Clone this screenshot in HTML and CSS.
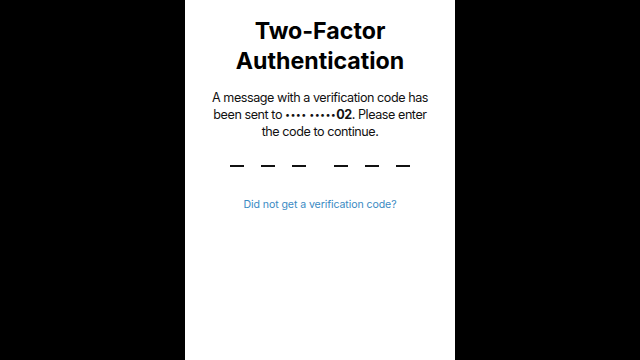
FILE: index.html
```html
<!DOCTYPE html>
<html>
<head>
<meta charset="utf-8">
<link rel="stylesheet" href="styles.css">
</head>
<body>
<div class="screen">
  <h1 class="title">Two-Factor<br>Authentication</h1>
  <p class="message">A message with a verification code has<br>been sent to <span class="mask">•••• •••••</span><b>02</b>. Please enter<br>the code to continue.</p>
  <div class="code">
    <div class="group"><span class="slot"></span><span class="slot"></span><span class="slot"></span></div>
    <div class="group"><span class="slot"></span><span class="slot"></span><span class="slot"></span></div>
  </div>
  <a class="link" href="#">Did not get a verification code?</a>
</div>
</body>
</html>
```
FILE: styles.css
```css
html, body {
  margin: 0;
  padding: 0;
  background: #000;
  height: 100%;
}
body {
  display: flex;
  justify-content: center;
  font-family: Inter, "Liberation Sans", sans-serif;
}
.screen {
  width: 270px;
  height: 360px;
  background: #fff;
  display: flex;
  flex-direction: column;
  align-items: center;
  text-align: center;
}
.title {
  margin: 16px 0 0;
  font-size: 23.2px;
  line-height: 30px;
  font-weight: 700;
  color: #000;
  letter-spacing: 0;
}
.message {
  margin: 13px 0 0;
  font-size: 12.6px;
  line-height: 17px;
  color: #111;
  letter-spacing: -0.45px;
  white-space: nowrap;
}
.message b { font-weight: 700; }
.mask {
  font-size: 9px;
  letter-spacing: 0.3px;
  vertical-align: 1px;
}
.code {
  margin-top: 25px;
  display: flex;
  gap: 28px;
}
.group {
  display: flex;
  gap: 17px;
}
.slot {
  display: block;
  width: 14px;
  height: 2px;
  background: #111;
}
.link {
  margin-top: 31px;
  font-size: 10.6px;
  letter-spacing: -0.1px;
  color: #3a8ac3;
  text-decoration: none;
}
```
